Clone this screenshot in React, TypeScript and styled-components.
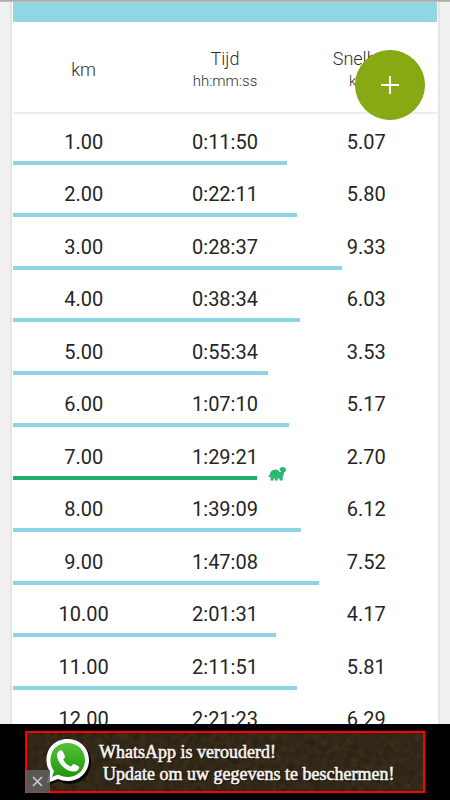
import React from "react";
import styled, { createGlobalStyle } from "styled-components";

const GlobalStyle = createGlobalStyle`
  * { box-sizing: border-box; }
  body {
    margin: 0;
    background: #f0f0f0;
    color: #252525;
    font-family: Roboto, "Liberation Sans", sans-serif;
  }
`;

const Page = styled.div`
  display: flex;
  flex-direction: column;
  height: 100vh;
  overflow: hidden;
`;

const StatusEdge = styled.div`
  flex: none;
  height: 2px;
  background: linear-gradient(#aaa6a2, #c2c0bd);
`;

const Content = styled.main`
  flex: 1;
  min-height: 0;
  overflow: hidden;
  position: relative;
  padding: 0 10px;
`;

const Card = styled.section`
  background: #fff;
  border: solid #e5e5e5;
  border-width: 0 2px;
  padding: 0 1px;
`;

const ChartEdge = styled.div`
  height: 20px;
  background: #92d6e4;
`;

const SplitTable = styled.table`
  display: block;
  width: 100%;
  font-size: 20px;
  line-height: 24px;
`;

const TableHead = styled.thead`
  display: block;
`;

const TableBody = styled.tbody`
  display: block;
`;

const HeadRow = styled.tr`
  display: grid;
  grid-template-columns: repeat(3, 1fr);
  align-items: center;
  height: 92px;
  padding-top: 5px;
  border-bottom: 2px solid #ececec;
`;

const HeadCell = styled.th`
  padding: 0;
  font-size: 18px;
  font-weight: 300;
  line-height: 22px;
  text-align: center;
  color: #303030;
`;

const Unit = styled.small`
  display: block;
  font-size: 15px;
`;

const Row = styled.tr`
  display: grid;
  grid-template-columns: repeat(3, 1fr);
  grid-template-rows: 1fr 4px;
  height: 52px;

  &:nth-child(odd) { height: 53px; }
  &:first-child { height: 51px; }
`;

const Cell = styled.td`
  align-self: end;
  padding: 0 0 7px;
  text-align: center;
`;

const Track = styled.td`
  grid-column: 1 / -1;
  display: flex;
  align-items: flex-end;
  gap: 11px;
  height: 4px;
  padding: 0;
`;

const Bar = styled.div<{ $slowest: boolean }>`
  flex: none;
  height: 4px;
  background: ${(p) => (p.$slowest ? "#22ad6b" : "#8dd5e4")};
`;

const TurtleIcon = styled.svg`
  flex: none;
  width: 18px;
  height: 14px;
  overflow: visible;
  fill: #2bb673;
`;

const AddButton = styled.button`
  position: absolute;
  top: 48px;
  right: 25px;
  display: grid;
  place-items: center;
  width: 70px;
  height: 70px;
  padding: 0;
  border: 1px solid #80a50c;
  border-radius: 50%;
  background: #86a914;
  color: #fff;
`;

const AdBar = styled.footer`
  flex: none;
  display: flex;
  justify-content: center;
  height: 76px;
  padding: 7px 25px;
  background: #000;
`;

const AdFrame = styled.div`
  position: relative;
  width: 100%;
  max-width: 400px;
`;

const AdLink = styled.a`
  position: relative;
  display: flex;
  align-items: center;
  height: 62px;
  padding-left: 14px;
  gap: 6px;
  overflow: hidden;
  border: 2px solid #f00;
  background: #271f12;
  color: #f4f4ef;
  font-family: "Liberation Serif", serif;
  font-size: 18px;
  line-height: 22px;
  text-decoration: none;
  white-space: nowrap;
`;

const Grain = styled.svg`
  position: absolute;
  inset: 0;
  width: 100%;
  height: 100%;
`;

const Logo = styled.svg`
  position: relative;
  flex: none;
  width: 52px;
  height: 52px;
`;

const AdText = styled.span`
  position: relative;
  display: flex;
  flex-direction: column;
  padding-top: 2px;
  text-shadow: 1px 1px 1px #000;
  -webkit-text-stroke: 0.6px #f4f4ef;
`;

const AdSecondLine = styled.span`
  padding-left: 4px;
`;

const CloseButton = styled.button`
  position: absolute;
  left: 0;
  bottom: 0;
  display: grid;
  place-items: center;
  width: 25px;
  height: 23px;
  padding: 0;
  border: 0;
  background: rgba(96, 96, 96, 0.85);
  color: #d0d0d0;
`;

const splits = [
  { km: "1.00", time: "0:11:50", speed: "5.07" },
  { km: "2.00", time: "0:22:11", speed: "5.80" },
  { km: "3.00", time: "0:28:37", speed: "9.33" },
  { km: "4.00", time: "0:38:34", speed: "6.03" },
  { km: "5.00", time: "0:55:34", speed: "3.53" },
  { km: "6.00", time: "1:07:10", speed: "5.17" },
  { km: "7.00", time: "1:29:21", speed: "2.70" },
  { km: "8.00", time: "1:39:09", speed: "6.12" },
  { km: "9.00", time: "1:47:08", speed: "7.52" },
  { km: "10.00", time: "2:01:31", speed: "4.17" },
  { km: "11.00", time: "2:11:51", speed: "5.81" },
  { km: "12.00", time: "2:21:23", speed: "6.29" },
];

const slowest = Math.min(...splits.map((s) => Number(s.speed)));

// Every bar starts near the middle of the row and grows with the speed.
const barWidth = (speed: string) => `${49.5 + Number(speed) * 3}%`;

function Turtle() {
  return (
    <TurtleIcon viewBox="0 0 18 14" role="img" aria-label="Langzaamste kilometer">
      <path d="M0 10.8 C.3 9.9 1 9.6 1.6 9.2 C2 6 4.100 3.500 7.200 3.400 C9.600 3.400 11 4.800 11.800 6.200 C12.700 6.200 13.200 5.700 13.100 5 L11.600 4.600 C11.200 2.400 12.500 1 14.600 1 C16.600 1 18 2.200 18 3.900 C18 5.300 17.100 5.900 16 6 C16 8.300 15.400 9.900 14.600 10.900 L14.800 14.500 L11.800 14.500 L11.300 12.600 L9.700 12.600 L9.700 14.500 L7 14.500 L6.700 12.600 L5.700 12.600 L5.600 14.500 L2.500 14.500 L2.500 11 Z" />
      <path d="M2.200 9.700 C5 10.800 9 10.700 12.200 8.600" fill="none" stroke="#4cc28a" strokeWidth=".4" />
    </TurtleIcon>
  );
}

function WhatsAppLogo() {
  return (
    <Logo viewBox="0 0 52 52" aria-hidden="true">
      <defs>
        <linearGradient id="leaf" x1="0" y1="0" x2="0" y2="1">
          <stop offset="0" stopColor="#55c236" />
          <stop offset="1" stopColor="#22960e" />
        </linearGradient>
      </defs>
      <path d="M29 4 C41 4 50 14 50 26 C50 39 41 48 28 48 C24 48 21 47 18 45 L6 50 L10 36 C8 33 7 30 7 26 C7 14 16 4 29 4Z" fill="#060703" opacity=".9" />
      <path d="M26.500 3 C39 3 48 12 48 24 C48 36 39 45 26.500 45 C23 45 20 44.300 17 43 L6 47 L9 35.500 C6.500 32 5.500 28.500 5.500 24 C5.500 12 14 3 26.500 3Z" fill="#fff" />
      <path d="M26.500 7 C36.500 7 44 14 44 24 C44 34 36.500 41 26.500 41 C23 41 20 40 17 38.500 L11 41 L13 35 C10.500 32 9.500 28.500 9.500 24 C9.500 14 16.500 7 26.500 7Z" fill="url(#leaf)" />
      <path d="M17.500 15.500 C19.500 13.500 21.200 14 22.300 16.500 L23.800 20 C24.300 21.800 22.700 22.500 22.300 23.500 C23.800 27 26.500 29.200 30 30.500 C31.200 29.300 32 27.500 33.500 28.200 L37.500 30.200 C38.800 31 38 33 37 34 C33.500 37 27.500 35.500 22.800 31.500 C18 27.500 13.800 19.500 17.500 15.500Z" fill="#fff" />
    </Logo>
  );
}

export default function App() {
  return (
    <Page>
      <GlobalStyle />
      <StatusEdge />
      <Content>
        <Card>
          <ChartEdge />
          <SplitTable>
            <TableHead>
              <HeadRow>
                <HeadCell scope="col">km</HeadCell>
                <HeadCell scope="col">
                  Tijd<Unit>hh:mm:ss</Unit>
                </HeadCell>
                <HeadCell scope="col">
                  Snelheid<Unit>km/h</Unit>
                </HeadCell>
              </HeadRow>
            </TableHead>
            <TableBody>
              {splits.map((s) => {
                const isSlowest = Number(s.speed) === slowest;
                return (
                  <Row key={s.km}>
                    <Cell>{s.km}</Cell>
                    <Cell>{s.time}</Cell>
                    <Cell>{s.speed}</Cell>
                    <Track>
                      <Bar $slowest={isSlowest} style={{ width: barWidth(s.speed) }} />
                      {isSlowest && <Turtle />}
                    </Track>
                  </Row>
                );
              })}
            </TableBody>
          </SplitTable>
        </Card>
        <AddButton type="button" aria-label="Toevoegen">
          <svg width="18" height="18" viewBox="0 0 18 18" fill="none" stroke="currentColor" strokeWidth="2">
            <path d="M9 0V18M0 9H18" />
          </svg>
        </AddButton>
      </Content>
      <AdBar>
        <AdFrame>
          <AdLink href="#update">
            <Grain aria-hidden="true">
              <filter id="grain" colorInterpolationFilters="sRGB">
                <feTurbulence type="fractalNoise" baseFrequency=".16" numOctaves="3" seed="4" />
                <feColorMatrix values="0 0 0 0 .3  0 0 0 0 .24  0 0 0 0 .14  .6 .5 0 0 -.25" />
              </filter>
              <rect width="100%" height="100%" filter="url(#grain)" />
            </Grain>
            <WhatsAppLogo />
            <AdText>
              <span>WhatsApp is verouderd!</span>
              <AdSecondLine>Update om uw gegevens te beschermen!</AdSecondLine>
            </AdText>
          </AdLink>
          <CloseButton type="button" aria-label="Sluiten">
            <svg width="11" height="11" viewBox="0 0 11 11" fill="none" stroke="currentColor" strokeWidth="1.500">
              <path d="M1 1L10 10M10 1L1 10" />
            </svg>
          </CloseButton>
        </AdFrame>
      </AdBar>
    </Page>
  );
}
